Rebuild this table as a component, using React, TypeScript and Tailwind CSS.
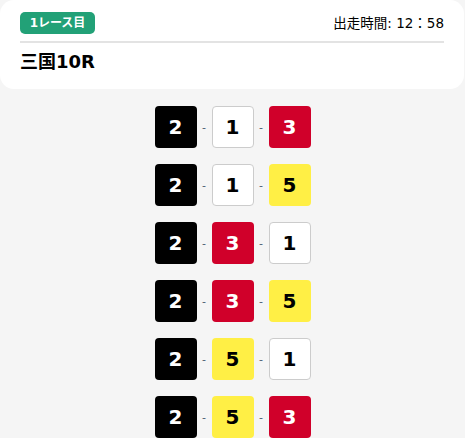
import type { FC } from 'react'

type Lane = 1 | 2 | 3 | 4 | 5 | 6

// 艇番ごとの色
const LANE_STYLE: Record<Lane, string> = {
  1: 'bg-white text-black border border-[#cccccc]',
  2: 'bg-black text-white',
  3: 'bg-[#d0002a] text-white',
  4: 'bg-[#1e5bc6] text-white',
  5: 'bg-[#ffef45] text-black',
  6: 'bg-[#1a9a4a] text-white',
}

const COMBOS: Lane[][] = [
  [2, 1, 3],
  [2, 1, 5],
  [2, 3, 1],
  [2, 3, 5],
  [2, 5, 1],
  [2, 5, 3],
]

const Boat: FC<{ lane: Lane }> = ({ lane }) => (
  <div
    className={`flex h-[42px] w-[42px] items-center justify-center rounded-[4px] text-[20px] font-bold ${LANE_STYLE[lane]}`}
  >
    {lane}
  </div>
)

const App: FC = () => {
  return (
    <div
      className="min-h-[438px] bg-[#f5f5f5]"
      style={{ fontFamily: '"DejaVu Sans", "Noto Sans CJK JP", sans-serif' }}
    >
      <header className="w-[464px] rounded-[14px] bg-white px-5 pt-3 pb-[15px]">
        <div className="flex items-center justify-between border-b-2 border-[#e3e3e3] pb-[7px]">
          <span className="flex h-[22px] w-[75px] items-center justify-center rounded-[5px] bg-[#22a177] text-[12px] font-bold text-white">
            1レース目
          </span>
          <span className="text-[13.5px] text-black">出走時間: 12：58</span>
        </div>
        <h1 className="mt-[7px] text-[18px] leading-[24px] font-bold text-black">三国10R</h1>
      </header>

      <div className="flex flex-col items-center gap-4 pt-[17px]">
        {COMBOS.map((combo, i) => (
          <div key={i} className="flex items-center">
            {combo.map((lane, j) => (
              <div key={j} className="flex items-center">
                {j > 0 && (
                  <span className="w-[15px] text-center text-[11px] leading-none text-[#4a5a70]">-</span>
                )}
                <Boat lane={lane} />
              </div>
            ))}
          </div>
        ))}
      </div>
    </div>
  )
}

export default App
